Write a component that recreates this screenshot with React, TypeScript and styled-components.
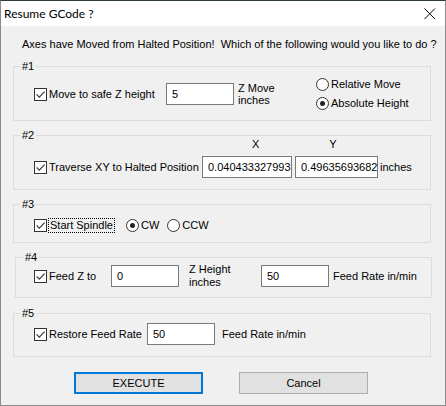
import styled, { createGlobalStyle } from 'styled-components';

const GlobalStyle = createGlobalStyle`
  html, body {
    margin: 0;
    padding: 0;
    background: #26302a;
  }
  body {
    font-family: "Liberation Sans", Arial, sans-serif;
    font-size: 11px;
    color: #000;
  }
`;

const Window = styled.div`
  width: 446px;
  height: 406px;
  box-sizing: border-box;
  border: 1px solid #8a8a8a;
  border-top-color: #2d3a30;
  background: #f0f0f0;
  display: flex;
  flex-direction: column;
`;

const TitleBar = styled.div`
  flex: none;
  height: 25px;
  background: #fff;
  display: flex;
  align-items: center;
  justify-content: space-between;
  padding: 0 9px 0 3px;
  font-family: "Lato", "Noto Sans", sans-serif;
  font-size: 12px;
`;

const Body = styled.div`
  display: flex;
  flex-direction: column;
  padding: 12px 12px 0 12px;
`;

const Intro = styled.div`
  line-height: 13px;
  margin-left: 9px;
  white-space: pre;
`;

/* group box: a thin frame with its "#n" caption sitting on the top line */
const Group = styled.div<{ $h: number; $pt: number; $mt?: number; $shift?: number }>`
  position: relative;
  box-sizing: border-box;
  margin-top: ${(p) => p.$mt ?? 14}px;
  margin-left: ${(p) => p.$shift ?? 0}px;
  width: ${(p) => (p.$shift ? 417 : 418)}px;
  height: ${(p) => p.$h}px;
  border: 1px solid #dcdcdc;
  padding: ${(p) => p.$pt}px 0 0 ${(p) => 20 - (p.$shift ?? 0)}px;
  display: flex;
  flex-direction: column;
`;

const Legend = styled.span<{ $x?: number }>`
  position: absolute;
  top: -7px;
  left: ${(p) => p.$x ?? 6}px;
  padding: 0 2px;
  line-height: 13px;
  background: #f0f0f0;
`;

const Row = styled.div<{ $h?: number; $mt?: number }>`
  display: flex;
  align-items: center;
  height: ${(p) => p.$h ?? 22}px;
  margin-top: ${(p) => p.$mt ?? 0}px;
`;

const HeaderRow = styled.div`
  display: flex;
  height: 13px;
  line-height: 13px;
  padding-left: 218px;
`;

const HeaderCell = styled.span<{ $ml?: number }>`
  margin-left: ${(p) => p.$ml ?? 0}px;
`;

const OptionWrap = styled.label<{ $w: number }>`
  flex: none;
  display: flex;
  align-items: center;
  width: ${(p) => p.$w}px;
`;

const CheckBox = styled.span`
  flex: none;
  width: 13px;
  height: 13px;
  box-sizing: border-box;
  border: 1px solid #333;
  background: #fff;
  display: flex;
  align-items: center;
  justify-content: center;
`;

const OptionText = styled.span<{ $focus?: boolean }>`
  line-height: 13px;
  white-space: nowrap;
  margin-left: ${(p) => (p.$focus ? 1 : 2)}px;
  padding: 0 ${(p) => (p.$focus ? 1 : 0)}px;
  border: ${(p) => (p.$focus ? '1px dotted #000' : 'none')};
`;

const RadioWrap = styled.label<{ $ml?: number }>`
  flex: none;
  display: flex;
  align-items: center;
  margin-left: ${(p) => p.$ml ?? 0}px;
  height: 13px;
`;

const RadioCircle = styled.span`
  flex: none;
  width: 13px;
  height: 13px;
  box-sizing: border-box;
  border: 1px solid #333;
  border-radius: 50%;
  background: #fff;
  display: flex;
  align-items: center;
  justify-content: center;
`;

const RadioDot = styled.span`
  width: 5px;
  height: 5px;
  border-radius: 50%;
  background: #222;
`;

const RadioText = styled.span`
  margin-left: 2px;
  line-height: 13px;
  white-space: nowrap;
`;

const RadioColumn = styled.div`
  display: flex;
  flex-direction: column;
  gap: 6px;
`;

const TextBox = styled.input<{ $w: number; $ml?: number }>`
  flex: none;
  box-sizing: border-box;
  width: ${(p) => p.$w}px;
  height: 22px;
  margin: 0 0 0 ${(p) => p.$ml ?? 0}px;
  padding: 0 0 0 5px;
  border: 1px solid #7a7a7a;
  background: #fff;
  font-family: "Liberation Sans", Arial, sans-serif;
  font-size: 11px;
  color: #000;
  outline: none;
`;

const Caption = styled.span<{ $ml?: number; $w?: number; $lh?: number }>`
  flex: none;
  margin-left: ${(p) => p.$ml ?? 0}px;
  width: ${(p) => (p.$w ? `${p.$w}px` : 'auto')};
  line-height: ${(p) => p.$lh ?? 13}px;
  white-space: nowrap;
`;

const ButtonRow = styled.div`
  display: flex;
  margin-top: 15px;
  padding-left: 61px;
  gap: 36px;
`;

const Button = styled.button<{ $primary?: boolean }>`
  box-sizing: border-box;
  width: 129px;
  height: 22px;
  padding: 0;
  background: #e1e1e1;
  border: ${(p) => (p.$primary ? '2px solid #0078d7' : '1px solid #adadad')};
  font-family: "Liberation Sans", Arial, sans-serif;
  font-size: 11px;
  color: #000;
`;

const Check = ({ label, width, focus }: { label: string; width: number; focus?: boolean }) => (
  <OptionWrap $w={width}>
    <CheckBox>
      <svg width="11" height="11" viewBox="0 0 11 11">
        <path d="M1.6 5.4 L4.3 8.1 L9.6 2.6" fill="none" stroke="#3a3a3a" strokeWidth="1.2" />
      </svg>
    </CheckBox>
    <OptionText $focus={focus}>{label}</OptionText>
  </OptionWrap>
);

const Radio = ({ label, checked, ml }: { label: string; checked?: boolean; ml?: number }) => (
  <RadioWrap $ml={ml}>
    <RadioCircle>{checked && <RadioDot />}</RadioCircle>
    <RadioText>{label}</RadioText>
  </RadioWrap>
);

export default function App() {
  return (
    <>
      <GlobalStyle />
      <Window>
        <TitleBar>
          <span>Resume GCode ?</span>
          <svg width="12" height="12" viewBox="0 0 12 12">
            <path d="M0.5 0.5 L11 11 M11 0.5 L0.5 11" stroke="#000" strokeWidth="1" />
          </svg>
        </TitleBar>
        <Body>
          <Intro>Axes have Moved from Halted Position!  Which of the following would you like to do ?</Intro>

          <Group $h={55} $pt={16} $mt={15}>
            <Legend>#1</Legend>
            <Row>
              <Check label="Move to safe Z height" width={132} />
              <TextBox $w={68} defaultValue="5" readOnly />
              <Caption $ml={4} $w={78} $lh={12}>
                Z Move
                <br />
                inches
              </Caption>
              <RadioColumn>
                <Radio label="Relative Move" />
                <Radio label="Absolute Height" checked />
              </RadioColumn>
            </Row>
          </Group>

          <Group $h={55} $pt={2}>
            <Legend>#2</Legend>
            <HeaderRow>
              <HeaderCell>X</HeaderCell>
              <HeaderCell $ml={70}>Y</HeaderCell>
            </HeaderRow>
            <Row $mt={5}>
              <Check label="Traverse XY to Halted Position" width={168} />
              <TextBox $w={90} defaultValue="0.040433327993" readOnly />
              <TextBox $w={83} $ml={3} defaultValue="0.4963569368205" readOnly />
              <Caption $ml={2}>inches</Caption>
            </Row>
          </Group>

          <Group $h={39} $pt={13}>
            <Legend>#3</Legend>
            <Row $h={15}>
              <Check label="Start Spindle" width={92} focus />
              <Radio label="CW" checked />
              <Radio label="CCW" ml={8} />
            </Row>
          </Group>

          <Group $h={41} $pt={7} $shift={2}>
            <Legend $x={7}>#4</Legend>
            <Row>
              <Check label="Feed Z to" width={77} />
              <TextBox $w={68} defaultValue="0" readOnly />
              <Caption $ml={10} $w={72}>
                Z Height
                <br />
                inches
              </Caption>
              <TextBox $w={68} defaultValue="50" readOnly />
              <Caption $ml={4}>Feed Rate in/min</Caption>
            </Row>
          </Group>

          <Group $h={44} $pt={9} $mt={15}>
            <Legend>#5</Legend>
            <Row>
              <Check label="Restore Feed Rate" width={113} />
              <TextBox $w={68} defaultValue="50" readOnly />
              <Caption $ml={7}>Feed Rate in/min</Caption>
            </Row>
          </Group>

          <ButtonRow>
            <Button $primary>EXECUTE</Button>
            <Button>Cancel</Button>
          </ButtonRow>
        </Body>
      </Window>
    </>
  );
}
